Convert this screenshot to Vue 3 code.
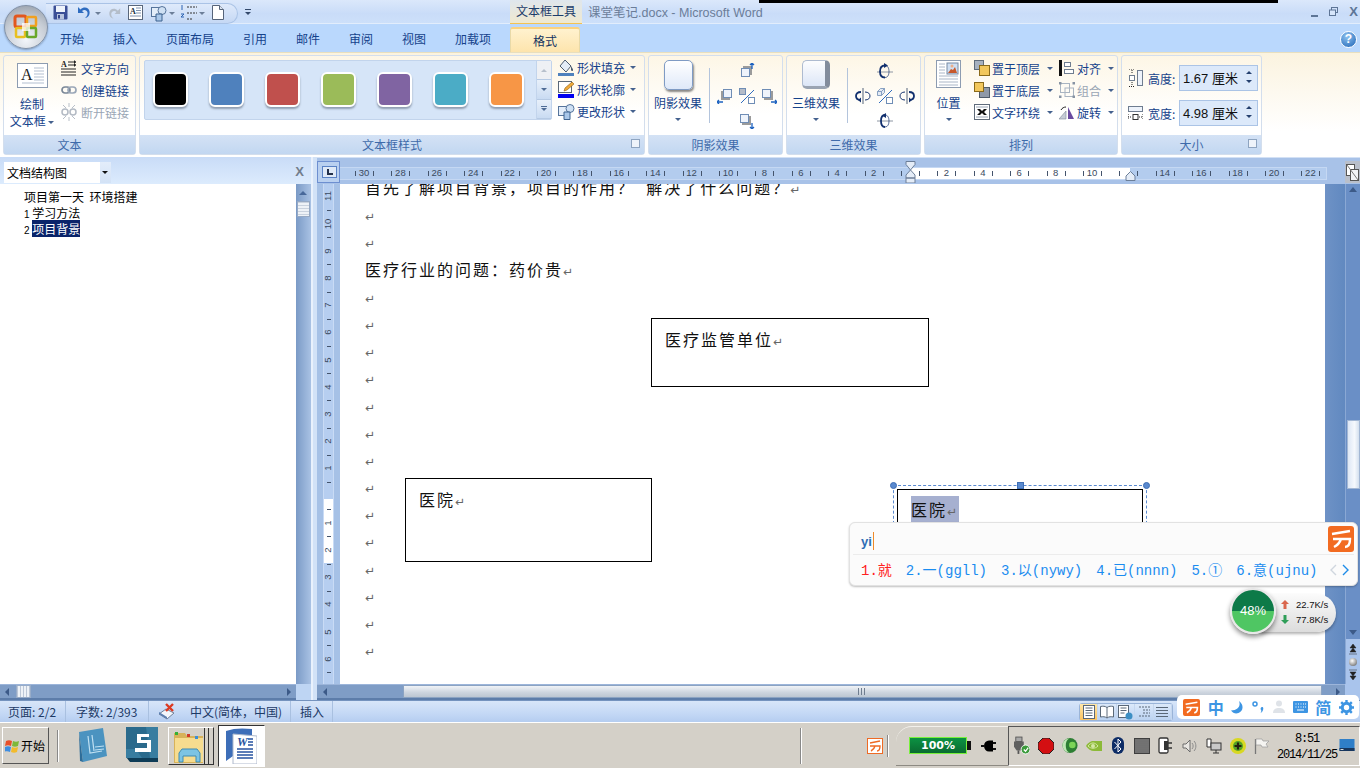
<template>
  <div class="word">
    <!-- title row -->
    <div class="titlebar">
      <div class="black-line"></div>
      <div class="orb">
        <svg width="26" height="26" viewBox="0 0 26 26">
          <rect x="2" y="2" width="11" height="11" rx="2" fill="none" stroke="#e2571e" stroke-width="3" />
          <rect x="14" y="3" width="9" height="9" rx="1" fill="none" stroke="#f0a020" stroke-width="2.5" />
          <rect x="3" y="14" width="9" height="9" rx="1" fill="none" stroke="#e8c020" stroke-width="2.5" />
          <rect x="14" y="14" width="9" height="9" rx="1" fill="none" stroke="#6aa82a" stroke-width="2.5" />
          <rect x="9" y="9" width="8" height="8" fill="#fff" opacity=".75" />
        </svg>
      </div>
      <div class="qat">
        <svg class="q1" width="15" height="15" viewBox="0 0 15 15">
          <rect x=".5" y=".5" width="14" height="14" rx="1" fill="#3b4f96" />
          <rect x="3" y="1" width="9" height="6" fill="#eef3fb" />
          <rect x="4" y="9" width="7" height="5.5" fill="#b8c4de" />
          <rect x="5" y="10" width="2" height="3.5" fill="#33458a" />
        </svg>
        <svg class="q2" width="16" height="15" viewBox="0 0 16 15">
          <path d="M3 2v6h6L7 6c2-2 5-1 5.500 1.500.3 2-.5 4-2.500 5.500 3.500-.5 5-3.500 4.500-6.500C14 2.500 9 1 5.500 4.500z" fill="#2f6cc0" />
        </svg>
        <i class="mini-arrow a1"></i>
        <svg class="q3" width="15" height="15" viewBox="0 0 16 15">
          <path d="M13 2v6H7l2-2C7 4 4 5 3.500 7.500c-.3 2 .5 4 2.500 5.500C2.500 12.500 1 9.500 1.500 6.500 2 2.500 7 1 10.500 4.500z" fill="#b4bdc9" />
        </svg>
        <svg class="q4" width="15" height="15" viewBox="0 0 15 15">
          <rect x=".5" y=".5" width="14" height="14" fill="#fff" stroke="#59677c" />
          <text x="2" y="9" font-size="8" font-weight="bold" font-family="Liberation Serif" fill="#234">A</text>
          <path d="M8 3h5M8 5.500h5M8 8h5M2 11h11" stroke="#7f92ad" />
        </svg>
        <svg class="q5" width="16" height="17" viewBox="0 0 16 17">
          <rect x=".5" y="2.500" width="9" height="9" fill="#e3edf9" stroke="#56749b" />
          <circle cx="11" cy="5.500" r="4" fill="#cfe0f3" stroke="#56749b" />
          <path d="M5 9h6v7H5z" fill="#a9c7e9" stroke="#3d628f" />
        </svg>
        <i class="mini-arrow a2"></i>
        <svg class="q6" width="18" height="16" viewBox="0 0 18 16">
          <path d="M7 2h10M7 8h10M7 14h6" stroke="#333" stroke-dasharray="2 1" />
          <path d="M2 0v5M1 9h3l-3 3h3" stroke="#2d62b1" fill="none" />
        </svg>
        <i class="mini-arrow a3"></i>
        <svg class="q7" width="12" height="15" viewBox="0 0 12 15">
          <path d="M.5.500h7l4 4v10H.5z" fill="#fff" stroke="#56647a" />
          <path d="M7.500.500v4h4" fill="#dbe4ef" stroke="#56647a" />
        </svg>
      </div>
      <div class="qat-more"><i></i><b></b></div>
      <div class="ctx-label">文本框工具</div>
      <div class="doc-title">课堂笔记.docx - Microsoft Word</div>
      <div class="winctl">
        <span class="min"></span>
        <svg width="9" height="9" viewBox="0 0 9 9">
          <rect x="2.500" y=".5" width="6" height="5" fill="none" stroke="#5d7596" />
          <rect x=".5" y="3" width="6" height="5.500" fill="#d6e5fa" stroke="#5d7596" />
        </svg>
        <span class="x">X</span>
      </div>
    </div>

    <!-- tabs -->
    <div class="tabs">
      <span v-for="t in tabs" :key="t" class="tab">{{ t }}</span>
      <span class="tab tab-active">格式</span>
      <span class="help">?</span>
    </div>

    <!-- ribbon -->
    <div class="ribbon">
      <section class="group g-text">
        <div class="group-body text-body">
          <div class="big-btn draw-btn">
            <svg width="31" height="25" viewBox="0 0 31 25">
              <rect x=".5" y=".5" width="30" height="24" fill="#fff" stroke="#8d9cb1" />
              <text x="4" y="17" font-size="16" font-family="Liberation Serif" fill="#222">A</text>
              <path d="M17 5h10M17 8h10M17 11h10M17 14h10M17 17h10M5 20h22" stroke="#b3bfd0" />
            </svg>
            <div class="lbl">绘制</div>
            <div class="lbl">文本框 <i class="arr"></i></div>
          </div>
          <div class="small-col">
            <div class="small-row">
              <svg width="16" height="17" viewBox="0 0 16 17">
                <text x="0" y="7" font-size="8" font-weight="bold" font-family="Liberation Serif" fill="#222">A</text>
                <path d="M7 2h8M7 5h8M0 9h15M0 12h15M0 15h15" stroke="#222" />
                <path d="M13 0l2 2-2 2zM13 3l2 2-2 2z" fill="#222" />
              </svg>
              <span>文字方向</span>
            </div>
            <div class="small-row">
              <svg width="16" height="10" viewBox="0 0 16 10">
                <rect x="1" y="2" width="8" height="6" rx="3" fill="none" stroke="#7a8797" stroke-width="1.700" />
                <rect x="7" y="2" width="8" height="6" rx="3" fill="none" stroke="#9aa7b8" stroke-width="1.700" />
              </svg>
              <span>创建链接</span>
            </div>
            <div class="small-row off">
              <svg width="16" height="18" viewBox="0 0 16 18">
                <path d="M2 2l3 3M14 2l-3 3M8 0v4M2 16l3-3M14 16l-3-3M8 14v4" stroke="#b8bfc8" />
                <rect x="1" y="6" width="6" height="6" rx="3" fill="none" stroke="#b3bac4" stroke-width="1.500" />
                <rect x="9" y="6" width="6" height="6" rx="3" fill="none" stroke="#b3bac4" stroke-width="1.500" />
              </svg>
              <span>断开链接</span>
            </div>
          </div>
        </div>
        <div class="group-foot">文本</div>
      </section>

      <section class="group g-style">
        <div class="group-body style-body">
          <div class="gallery">
            <div class="swatches">
              <span v-for="c in swatches" :key="c" class="swatch" :style="{ background: c }"></span>
            </div>
            <div class="gal-scroll">
              <span class="up"><i></i></span>
              <span class="down"><i></i></span>
              <span class="more"><b></b><i></i></span>
            </div>
          </div>
          <div class="small-col style-col">
            <div class="small-row">
              <svg width="17" height="17" viewBox="0 0 17 17">
                <path d="M7 1l6 6-5 6-6-6z" fill="#e4ecf6" stroke="#4d5c70" />
                <path d="M13 7c1 2 2.500 3 2 4.500-.6 1-2 .5-2-1z" fill="#4d5c70" />
                <rect x="0" y="14" width="16" height="3" fill="#4f81bd" />
              </svg>
              <span>形状填充</span><i class="arr"></i>
            </div>
            <div class="small-row">
              <svg width="17" height="17" viewBox="0 0 17 17">
                <rect x=".5" y=".5" width="13" height="11" fill="#fff" stroke="#5a6878" />
                <path d="M6 10l1-3 7-6 2 2-7 6z" fill="#efa93a" stroke="#8c5c14" stroke-width=".6" />
                <rect x="0" y="13" width="16" height="4" fill="#0000f0" />
              </svg>
              <span>形状轮廓</span><i class="arr"></i>
            </div>
            <div class="small-row">
              <svg width="17" height="17" viewBox="0 0 17 17">
                <rect x=".5" y="3.500" width="9" height="9" fill="#e3edf9" stroke="#56749b" />
                <circle cx="12" cy="5.500" r="4" fill="#cfe0f3" stroke="#56749b" />
                <path d="M6 9h6v7.500H6z" fill="#a9c7e9" stroke="#3d628f" />
              </svg>
              <span>更改形状</span><i class="arr"></i>
            </div>
          </div>
        </div>
        <div class="group-foot">文本框样式<em class="launcher"></em></div>
      </section>

      <section class="group g-fx">
        <div class="group-body fx-body">
          <div class="big-btn fx-btn">
            <span class="shadow-shape"></span>
            <div class="lbl">阴影效果</div>
            <i class="arr"></i>
          </div>
          <div class="fx-sep"></div>
          <div class="nudge">
            <svg v-for="n in shadowNudge" :key="n.id" :class="n.id" width="16" height="16" viewBox="0 0 16 16">
              <rect :x="n.sx" :y="n.sy" width="9" height="9" fill="#9b9b9b" />
              <rect :x="n.bx + .5" :y="n.by + .5" width="8" height="8" fill="#eef3fb" stroke="#6f8db5" />
              <path :d="n.d" stroke="#1d62c0" stroke-width="1.300" fill="none" />
            </svg>
            <svg class="c" width="16" height="16" viewBox="0 0 16 16">
              <rect x=".5" y=".5" width="6" height="6" fill="#b4bcc8" stroke="#6f8db5" />
              <rect x="9.500" y="9.500" width="6" height="6" fill="#fff" stroke="#6f8db5" />
              <path d="M2 15L15 2" stroke="#2f6cc0" />
            </svg>
          </div>
        </div>
        <div class="group-foot">阴影效果</div>
      </section>

      <section class="group g-fx">
        <div class="group-body fx-body">
          <div class="big-btn fx-btn">
            <span class="cube-shape"></span>
            <div class="lbl">三维效果</div>
            <i class="arr"></i>
          </div>
          <div class="fx-sep"></div>
          <div class="nudge">
            <svg class="t" width="16" height="16" viewBox="0 0 16 16">
              <path d="M0 9h16" stroke="#8d96a3" />
              <path d="M8 2.500C4 2.500 3 5.500 3 8.500s1 6 5 6" fill="none" stroke="#12306e" stroke-width="1.800" />
              <path d="M8 2.500c3 0 4 3 4 6s-1 6-4 6" fill="none" stroke="#12306e" stroke-width=".7" />
              <path d="M7 0l4 2.500L7 5z" fill="#12306e" />
            </svg>
            <svg class="l" width="16" height="16" viewBox="0 0 16 16">
              <path d="M8 0v16" stroke="#8d96a3" stroke-width="1.500" />
              <path d="M6 4C2.500 4 1 6 1 8s1.500 4 5 4" fill="none" stroke="#12306e" stroke-width="1.800" />
              <path d="M10 4c3.500 0 5 2 5 4s-1.500 4-5 4" fill="none" stroke="#12306e" stroke-width="1" />
              <path d="M6 9.500v5L3 12z" fill="#12306e" />
            </svg>
            <svg class="c" width="16" height="16" viewBox="0 0 16 16">
              <path d="M.5 3.500l3-3h4v4l-3 3h-4zM.5 3.500h4v4M4.500 3.500l3-3" fill="#e4ebf5" stroke="#6f8db5" stroke-width=".8" />
              <rect x="9.500" y="9.500" width="6" height="6" fill="#fff" stroke="#6f8db5" />
              <path d="M2 15L15 2" stroke="#2f6cc0" />
            </svg>
            <svg class="r" width="16" height="16" viewBox="0 0 16 16">
              <path d="M8 0v16" stroke="#8d96a3" stroke-width="1.500" />
              <path d="M10 4c3.500 0 5 2 5 4s-1.500 4-5 4" fill="none" stroke="#12306e" stroke-width="1.800" />
              <path d="M6 4C2.500 4 1 6 1 8s1.500 4 5 4" fill="none" stroke="#12306e" stroke-width="1" />
              <path d="M10 9.500v5l3-2.500z" fill="#12306e" />
            </svg>
            <svg class="b" width="16" height="16" viewBox="0 0 16 16">
              <path d="M0 8h16" stroke="#8d96a3" />
              <path d="M8 2c-3 0-4 3-4 6s1 6 4 6" fill="none" stroke="#12306e" stroke-width="1.800" />
              <path d="M8 2c3 0 4 3 4 6s-1 6-4 6" fill="none" stroke="#12306e" stroke-width=".7" />
              <path d="M9 0L5 2.500 9 5z" fill="#12306e" />
            </svg>
          </div>
        </div>
        <div class="group-foot">三维效果</div>
      </section>

      <section class="group g-arrange">
        <div class="group-body arrange-body">
          <div class="big-btn pos-btn">
            <svg width="25" height="28" viewBox="0 0 25 28">
              <rect x=".5" y=".5" width="24" height="27" fill="#fff" stroke="#8d9cb1" />
              <path d="M3 4h6M3 7h6M3 10h6M3 13h6M3 16h19M3 19h19M3 22h19M3 25h19" stroke="#aab6c7" />
              <rect x="11" y="3" width="11" height="11" fill="#cfdff2" stroke="#7689a3" />
              <path d="M12 13l3-4 2 1 2-3 2 6z" fill="#c7582c" />
              <circle cx="16" cy="6" r="1.500" fill="#ecae8a" />
            </svg>
            <div class="lbl">位置</div>
            <i class="arr"></i>
          </div>
          <div class="small-col arr-col">
            <div class="small-row">
              <svg width="16" height="16" viewBox="0 0 16 16"><rect x=".5" y=".5" width="9" height="9" fill="#a7b1bf" stroke="#5f6b7a" /><rect x="5.500" y="5.500" width="10" height="10" fill="#f2c75c" stroke="#8a6a1a" /></svg>
              <span>置于顶层</span><i class="arr"></i>
            </div>
            <div class="small-row">
              <svg width="16" height="16" viewBox="0 0 16 16"><rect x="5.500" y="5.500" width="10" height="10" fill="#8f99a8" stroke="#4f5b6a" /><rect x=".5" y=".5" width="9" height="9" fill="#f2c75c" stroke="#8a6a1a" /></svg>
              <span>置于底层</span><i class="arr"></i>
            </div>
            <div class="small-row">
              <svg width="16" height="16" viewBox="0 0 16 16"><rect x=".5" y=".5" width="15" height="15" fill="#fff" stroke="#5f6b7a" /><path d="M2 3h12M2 13h12" stroke="#98a4b4" /><path d="M3 5l3 3-3 3h3l2-2 2 2h3l-3-3 3-3h-3L8 7 6 5z" fill="#111" /></svg>
              <span>文字环绕</span><i class="arr"></i>
            </div>
          </div>
          <div class="small-col arr-col2">
            <div class="small-row">
              <svg width="16" height="16" viewBox="0 0 16 16"><rect x="0" y="0" width="3" height="16" fill="#111" /><rect x="5.500" y="2.500" width="6" height="4" fill="#fff" stroke="#6f7d90" /><rect x="5.500" y="9.500" width="9" height="4" fill="#fff" stroke="#6f7d90" /></svg>
              <span>对齐</span><i class="arr"></i>
            </div>
            <div class="small-row off">
              <svg width="16" height="16" viewBox="0 0 16 16"><rect x="1.500" y="1.500" width="9" height="9" fill="none" stroke="#a9b4c2" /><rect x="6" y="6" width="8.500" height="8.500" fill="none" stroke="#a9b4c2" /><path d="M0 0h2.500v2.500H0zM13.500 0H16v2.500h-2.500zM0 13.500h2.500V16H0zM13.500 13.500H16V16h-2.500z" fill="#8793a3" /></svg>
              <span>组合</span><i class="arr"></i>
            </div>
            <div class="small-row">
              <svg width="16" height="16" viewBox="0 0 16 16"><path d="M0 15L7 7v8z" fill="#c6ccd6" stroke="#7d8897" stroke-width=".6" /><path d="M15 15L9 3v12z" fill="#6a4ba0" /><path d="M2 6c1-2 3-3 5-3" fill="none" stroke="#222" /></svg>
              <span>旋转</span><i class="arr"></i>
            </div>
          </div>
        </div>
        <div class="group-foot">排列</div>
      </section>

      <section class="group g-size">
        <div class="group-body size-body">
          <div class="size-row">
            <svg width="15" height="18" viewBox="0 0 15 18">
              <rect x="9.500" y="1.500" width="5" height="15" fill="#eef3fb" stroke="#6f7d90" />
              <rect x="1.500" y="6.500" width="5" height="5" fill="#fff" stroke="#6f7d90" />
              <path d="M1 0h6M1 17.500h6" stroke="#222" stroke-dasharray="1 1" />
              <path d="M4 1v4M4 13v4" stroke="#222" stroke-dasharray="1 1" />
            </svg>
            <span class="sz-lbl">高度:</span>
            <div class="spin"><span>1.67 厘米</span><div class="spin-btns"><i class="u"></i><i class="d"></i></div></div>
          </div>
          <div class="size-row">
            <svg width="15" height="14" viewBox="0 0 15 14">
              <rect x=".5" y=".5" width="14" height="5" fill="#eef3fb" stroke="#6f7d90" />
              <path d="M0 8v6M15 8v6M0 11h4M11 11h4" fill="none" stroke="#222" stroke-dasharray="1 1" />
              <rect x="5" y="8.500" width="5" height="5" fill="#fff" stroke="#333" />
            </svg>
            <span class="sz-lbl">宽度:</span>
            <div class="spin"><span>4.98 厘米</span><div class="spin-btns"><i class="u"></i><i class="d"></i></div></div>
          </div>
        </div>
        <div class="group-foot">大小<em class="launcher"></em></div>
      </section>
    </div>

    <!-- main -->
    <div class="work">
      <aside class="nav">
        <div class="nav-head">
          <div class="nav-select"><span>文档结构图</span><i></i></div>
          <span class="nav-x">X</span>
        </div>
        <div class="nav-main">
          <div class="nav-list">
            <div>项目第一天&nbsp; 环境搭建</div>
            <div><small>1</small> 学习方法</div>
            <div><small>2</small> <mark>项目背景</mark></div>
          </div>
          <div class="vscroll">
            <i class="tri-up"></i>
            <span class="thumb"></span>
          </div>
        </div>
        <div class="nav-hscroll">
          <i class="tri-l"></i><span class="hthumb"></span><i class="tri-r"></i>
        </div>
      </aside>
      <div class="split"></div>

      <div class="docarea">
        <div class="ruler-top">
          <div class="corner"><span></span></div>
          <div class="hruler">
            <div class="white-zone"></div>
            <span v-for="n in hNums" :key="n.x" class="hnum" :style="{ left: n.x + 'px' }">{{ n.t }}</span>
            <span v-for="x in hTicks" :key="'t' + x" class="htick" :style="{ left: x + 'px' }"></span>
            <svg class="indent-l" width="11" height="22" viewBox="0 0 11 22">
              <path d="M1 .5h9v3L5.500 9 1 3.500zM5.500 9L10 14v3H1v-3zM1 17h9v5H1z" fill="#e4ecf7" stroke="#6c7f99" />
            </svg>
            <svg class="indent-r" width="11" height="10" viewBox="0 0 11 10">
              <path d="M5.500 .5L10 5v4.500H1V5z" fill="#e4ecf7" stroke="#6c7f99" />
            </svg>
          </div>
          <div class="ruler-toggle">
            <svg width="13" height="17" viewBox="0 0 13 17">
              <rect x=".5" y=".5" width="8" height="11" fill="#fff" stroke="#555" />
              <rect x="4.500" y="5.500" width="8" height="11" fill="#f2f4f7" stroke="#555" />
              <path d="M1 1l11 15" stroke="#777" />
            </svg>
          </div>
        </div>
        <div class="doc-mid">
          <div class="vruler">
            <div class="vband">
              <div class="vwhite"></div>
              <span v-for="n in vNums" :key="n.y" class="vnum" :style="{ top: n.y + 'px' }">{{ n.t }}</span>
              <span v-for="y in vTicks" :key="'v' + y" class="vtick" :style="{ top: y + 'px' }"></span>
            </div>
          </div>
          <div class="page">
            <p class="cut">首先了解项目背景，项目的作用？&nbsp; 解决了什么问题？<i class="ret">↵</i></p>
            <p><i class="ret">↵</i></p>
            <p><i class="ret">↵</i></p>
            <p>医疗行业的问题：药价贵<i class="ret">↵</i></p>
            <p v-for="n in 14" :key="n"><i class="ret">↵</i></p>

            <div class="shape s1">医疗监管单位<i class="ret">↵</i></div>
            <div class="shape s2">医院<i class="ret">↵</i></div>
            <div class="sel-frame">
              <span class="h h1"></span><span class="h h2"></span><span class="h h3"></span>
              <div class="shape s3"><span class="sel-text">医院<i class="ret">↵</i></span></div>
            </div>
          </div>
          <div class="gutter"></div>
          <div class="main-vs">
            <i class="main-up"></i>
            <span class="main-thumb"></span>
            <i class="main-down"></i>
            <div class="browse">
              <svg width="12" height="12" viewBox="0 0 12 12"><path d="M6 1L9 5H3zM6 5l3 4H3zM2 11h8" fill="#222" stroke="#222" stroke-width=".5" /></svg>
              <span class="browse-dot"></span>
              <svg width="12" height="12" viewBox="0 0 12 12"><path d="M2 1h8M6 7L3 3h6zM6 11L3 7h6z" fill="#222" stroke="#222" stroke-width=".5" /></svg>
            </div>
          </div>
        </div>
        <div class="main-hs">
          <i class="tri-l"></i>
          <div class="main-hthumb"><span class="grip"></span></div>
          <i class="tri-r"></i>
        </div>
      </div>

      <!-- IME candidate window -->
      <div class="ime">
        <div class="ime-top">
          <b>yi</b><span class="caret"></span>
          <div class="ime-logo"><svg width="26" height="26" viewBox="0 0 26 26"><rect width="26" height="26" rx="3" fill="#f26b21" /><path d="M4 8c6-1 12-2 18-3M5 13h17c0 5-1 8-5 8M13 13c-1 3-3 6-7 8" fill="none" stroke="#fff" stroke-width="2.400" /></svg></div>
        </div>
        <div class="ime-cands">
          <span class="hit">1.就</span>
          <span v-for="c in candidates" :key="c">{{ c }}</span>
          <span class="pager">
            <svg width="8" height="12" viewBox="0 0 8 12"><path d="M7 1L2 6l5 5" fill="none" stroke="#cfd6de" stroke-width="1.400" /></svg>
            <svg width="8" height="12" viewBox="0 0 8 12"><path d="M1 1l5 5-5 5" fill="none" stroke="#1d8ce8" stroke-width="1.400" /></svg>
          </span>
        </div>
      </div>

      <!-- net speed widget -->
      <div class="net">
        <div class="net-speed">
          <div><svg width="8" height="9" viewBox="0 0 8 9"><path d="M4 0l4 4H5.500v5h-3V4H0z" fill="#d9664d" /></svg><span>22.7K/s</span></div>
          <div><svg width="8" height="9" viewBox="0 0 8 9"><path d="M4 9L0 5h2.500V0h3v5H8z" fill="#2f9e58" /></svg><span>77.8K/s</span></div>
        </div>
        <div class="net-ball">48%</div>
      </div>
    </div>

    <!-- status -->
    <div class="status">
      <span class="st st1">页面: 2/2</span>
      <span class="st st2">字数: 2/393</span>
      <span class="st st4">
        <svg width="18" height="17" viewBox="0 0 18 17">
          <path d="M1 11l7-5 8 4-7 6z" fill="#f3f6fb" stroke="#6f8099" />
          <path d="M1 11l8 5v-2L1 9z" fill="#5a7eb0" />
          <path d="M8 1l7 7M15 1L8 8" stroke="#dc3a22" stroke-width="2.400" />
        </svg>
        中文(简体，中国)
      </span>
      <span class="st st5">插入</span>
      <div class="views">
        <span class="vb on"><svg width="14" height="14" viewBox="0 0 14 14"><rect x="1.500" y=".5" width="11" height="13" fill="#fff" stroke="#5a6878" /><path d="M3.500 3h7M3.500 5.500h7M3.500 8h7M3.500 10.500h7" stroke="#5a6878" /></svg></span>
        <span class="vb"><svg width="14" height="14" viewBox="0 0 14 14"><path d="M7 2.500C5 1 3 1 .5 1.500v10.500c2.500-.5 4.500-.5 6.500 1 2-1.500 4-1.500 6.500-1V1.500C11 1 9 1 7 2.500zM7 2.500V13" fill="#fff" stroke="#5a6878" /></svg></span>
        <span class="vb"><svg width="15" height="15" viewBox="0 0 15 15"><rect x=".5" y=".5" width="10" height="12" fill="#fff" stroke="#5a6878" /><path d="M2.500 3h6M2.500 5.500h6M2.500 8h4" stroke="#5a6878" /><circle cx="11" cy="11" r="3.500" fill="#3d8fc4" /></svg></span>
        <span class="vb"><svg width="14" height="14" viewBox="0 0 14 14"><path d="M2 2h11M6 5h7M6 8h7M2 11h11" stroke="#5a6878" stroke-dasharray="2 1" /></svg></span>
        <span class="vb"><svg width="14" height="14" viewBox="0 0 14 14"><path d="M1 2.500h12M1 5.500h12M1 8.500h12M1 11.500h12" stroke="#5a6878" /></svg></span>
      </div>
      <div class="ime-bar">
        <svg width="17" height="17" viewBox="0 0 26 26"><rect width="26" height="26" rx="3" fill="#f26b21" /><path d="M4 8c6-1 12-2 18-3M5 13h17c0 5-1 8-5 8M13 13c-1 3-3 6-7 8" fill="none" stroke="#fff" stroke-width="2.600" /></svg>
        <span class="ib-cn">中</span>
        <svg width="13" height="13" viewBox="0 0 13 13"><path d="M8 0c2 5-1 9-8 9.500C2 12.500 5 13 7.500 12 12 10.500 13.500 4 8 0z" fill="#3d95e3" /></svg>
        <svg width="13" height="13" viewBox="0 0 13 13"><circle cx="3" cy="3" r="2" fill="none" stroke="#3d95e3" stroke-width="1.500" /><path d="M10 6c1.500 0 2 2 0 5l-1.500 1c1-1.500 1-2.500.5-3C8 7.500 9 6 10 6z" fill="#3d95e3" /></svg>
        <svg width="12" height="14" viewBox="0 0 12 14"><circle cx="6" cy="3.500" r="3" fill="#dfe3e8" /><path d="M0 13c0-4 3-5 6-5s6 1 6 5z" fill="#dfe3e8" /></svg>
        <svg width="15" height="12" viewBox="0 0 15 12"><rect width="15" height="12" rx="1" fill="#3d95e3" /><path d="M2.500 3h1M5 3h1M7.500 3h1M10 3h1M12 3h1M2.500 6h1M5 6h1M7.500 6h1M10 6h1M12 6h1M4 9h7" stroke="#fff" /></svg>
        <span class="ib-cn">简</span>
        <svg width="15" height="15" viewBox="0 0 15 15"><circle cx="7.500" cy="7.500" r="4.200" fill="none" stroke="#3d95e3" stroke-width="3" /><path d="M7.500 0v3M7.500 12v3M0 7.500h3M12 7.500h3M2.200 2.200l2 2M10.800 10.800l2 2M12.800 2.200l-2 2M4.200 10.800l-2 2" stroke="#3d95e3" stroke-width="2.400" /></svg>
      </div>
    </div>

    <!-- taskbar -->
    <div class="taskbar">
      <div class="start">
        <svg width="16" height="16" viewBox="0 0 16 16">
          <path d="M1 3c2-1 4-1 6 0l-1 5c-2-1-4-1-6 0z" fill="#e8502a" />
          <path d="M8 3c2 1 4 1 6 0l-1 5c-2 1-4 1-6 0z" fill="#7eb83a" />
          <path d="M0 9c2-1 4-1 6 0l-1 5c-2-1-4-1-6 0z" fill="#3e8de0" />
          <path d="M7 9c2 1 4 1 6 0l-1 5c-2 1-4 1-6 0z" fill="#f2bb2c" />
        </svg>
        <span>开始</span>
      </div>
      <span class="tb-div"></span>
      <div class="tb-app app-book">
        <svg width="32" height="38" viewBox="0 0 32 38">
          <path d="M3 5l24-4 4 28-24 6z" fill="#4b93c0" />
          <path d="M3 5l4 30-3-1z" fill="#2e6d99" />
          <path d="M12 9l2 17 12-2M16 8l2 16M19 20l9-1M19 23l9-1" stroke="#bfe0f2" stroke-width="1.200" fill="none" />
        </svg>
      </div>
      <div class="tb-app app-s">
        <svg width="32" height="36" viewBox="0 0 32 36">
          <path d="M0 30l4 5h28v-5z" fill="#0e3c56" />
          <rect width="32" height="31" fill="#2a6a8c" />
          <path d="M20 0h12v31h-8zM0 22h10l6 9H0z" fill="#3f86a8" opacity=".7" />
          <path d="M23 7H11v9h10v5H9v4h16v-12H15v-3h8z" fill="#fff" />
        </svg>
      </div>
      <div class="tb-group">
        <svg width="32" height="34" viewBox="0 0 32 34">
          <path d="M1 3h11l2 3h16v27H1z" fill="#d7b25a" />
          <path d="M2 8h28v24H2z" fill="#f6dc8f" />
          <rect x="2" y="2" width="3" height="3" fill="#35b035" />
          <rect x="14" y="4" width="3" height="3" fill="#d03a2a" />
          <rect x="22" y="6" width="3" height="3" fill="#3a8ed8" />
          <path d="M6 32v-9l3-4h15l3 4v9h-4v-6H10v6z" fill="#7cc4e4" stroke="#3e8bb2" />
        </svg>
      </div>
      <div class="tb-word">
        <svg width="33" height="36" viewBox="0 0 33 36">
          <path d="M2 3c8-3 17-3 26-2v7H9v20l-7 5z" fill="#3d6eb8" />
          <path d="M9 6l24 2v28H9z" fill="#fff" stroke="#aeb9cc" />
          <text x="13" y="18" font-size="12" font-weight="bold" font-style="italic" font-family="Liberation Serif" fill="#2552a0">W</text>
          <path d="M13 21h16M13 24h16M13 27h16M13 30h16M24 11h5M24 14h5M24 17h5" stroke="#2552a0" stroke-width="1.500" />
        </svg>
      </div>

      <div class="tb-fill"></div>
      <span class="tb-div long"></span>
      <svg class="tb-sogou" width="16" height="16" viewBox="0 0 16 16"><rect x=".5" y=".5" width="15" height="15" fill="#fff" stroke="#ee6a24" /><path d="M3 5l10-2M3 8h10c0 3-1 5-3 5M8 8c-.5 2-2 4-4 5" fill="none" stroke="#ee6a24" stroke-width="1.400" /></svg>
      <span class="tb-div short"></span>

      <div class="power">
        <div class="battery"><span>100%</span><i></i></div>
        <svg width="15" height="12" viewBox="0 0 15 12"><path d="M0 6h3M12 3h3M12 9h3" stroke="#111" stroke-width="2" /><path d="M3 6a5 5.500 0 0 1 5-5.500h4v11H8A5 5.500 0 0 1 3 6z" fill="#000" /></svg>
      </div>

      <div class="tray">
        <svg width="18" height="19" viewBox="0 0 18 19"><rect x="2" y="0" width="7" height="5" fill="#a8a8a8" stroke="#555" /><path d="M0 5h11v6l-3 4H3l-3-4z" fill="#5f5f5f" /><path d="M5 15v4" stroke="#555" stroke-width="2" /><circle cx="13" cy="14" r="5" fill="#3b9a3b" stroke="#fff" /><path d="M11 14l2 2 3-4" fill="none" stroke="#fff" stroke-width="1.400" /></svg>
        <svg width="16" height="16" viewBox="0 0 16 16"><path d="M5 0h6l5 5v6l-5 5H5l-5-5V5z" fill="#d40f12" stroke="#222" /></svg>
        <svg width="17" height="17" viewBox="0 0 17 17"><circle cx="8.500" cy="8.500" r="8" fill="#2d7f33" /><path d="M8 1a7.500 7.500 0 1 0 0 15c-3-1-4-4-4-7.500S5 2 8 1z" fill="#bfe8b5" /><circle cx="11" cy="8" r="3.500" fill="#7cd558" /></svg>
        <svg width="16" height="11" viewBox="0 0 16 11"><path d="M6 1C3 2 1 4 0 6c2 3 5 5 8 5h8V1z" fill="#8cba38" /><path d="M2 6c3-4 7-4 10 0-3 3-7 3-10 0z" fill="none" stroke="#d4e8a4" /><circle cx="7" cy="6" r="2" fill="#d4e8a4" /></svg>
        <svg width="12" height="17" viewBox="0 0 12 17"><rect width="12" height="17" rx="6" fill="#0d2c66" /><path d="M2.500 5l6.500 7-3 3V2l3 3-6.500 7" fill="none" stroke="#fff" /></svg>
        <svg width="16" height="16" viewBox="0 0 16 16"><rect width="16" height="16" fill="#3f3f3f" /><path d="M1 2h14M1 4h14M1 6h14M1 8h14M1 10h14M1 12h14M1 14h14" stroke="#d0d0d0" stroke-width=".7" /></svg>
        <svg width="16" height="17" viewBox="0 0 16 17"><rect x="1" y="1" width="9" height="15" rx="1.500" fill="#fff" stroke="#333" stroke-width="1.300" /><path d="M8 6h6M8 11h6" stroke="#333" stroke-width="1.400" /><path d="M6 4h4v9H6z" fill="#333" /></svg>
        <svg width="16" height="14" viewBox="0 0 16 14"><path d="M1 5h3l4-4v12L4 9H1z" fill="#e8e6e2" stroke="#6c6c6c" /><path d="M10 4c1.500 1.500 1.500 4.500 0 6M12 2c2.500 2.500 2.500 7.500 0 10" fill="none" stroke="#8c8c8c" /></svg>
        <svg width="16" height="16" viewBox="0 0 16 16"><path d="M1 1h4v8H1z" fill="#fff" stroke="#333" /><rect x="5" y="5" width="10" height="7" fill="#c8c8c8" stroke="#333" /><path d="M10 12v3M7 15h6" stroke="#333" /></svg>
        <svg width="16" height="16" viewBox="0 0 16 16"><circle cx="8" cy="8" r="8" fill="#d8d823" /><circle cx="8" cy="8" r="5" fill="#55a325" /><path d="M8 4.500v7M4.500 8h7" stroke="#231f0f" stroke-width="2.200" /></svg>
        <svg width="16" height="16" viewBox="0 0 16 16"><path d="M1.500 1v15" stroke="#777" stroke-width="1.300" /><path d="M2 1h6l1 2h6l-3 3 2 3H8L7 7H2z" fill="#f5f4f1" stroke="#999" stroke-width=".7" /></svg>
        <div class="clock"><div>8:51</div><div>2014/11/25</div></div>
        <svg class="desk" width="15" height="13" viewBox="0 0 15 13"><rect width="15" height="12" fill="#2f7fc8" /><rect x="0" y="9" width="15" height="3" fill="#17375e" /><rect x="1" y="10" width="3" height="1" fill="#ddd" /></svg>
      </div>
    </div>
  </div>
</template>

<script setup>
const tabs = ['开始', '插入', '页面布局', '引用', '邮件', '审阅', '视图', '加载项']
const swatches = ['#000000', '#4f81bd', '#c0504d', '#9bbb59', '#8064a2', '#4bacc6', '#f79646']
const candidates = ['2.一(ggll)', '3.以(nywy)', '4.已(nnnn)', '5.①', '6.意(ujnu)']

// s = shadow square, b = box square
const shadowNudge = [
  { id: 't', sx: 4, sy: 3, bx: 2, by: 5, d: 'M13 6V0M11 2l2-2 2 2' },
  { id: 'l', sx: 4, sy: 3, bx: 6, by: 1, d: 'M0 14h6M2 12l-2 2 2 2' },
  { id: 'r', sx: 3, sy: 3, bx: 1, by: 1, d: 'M10 14h6M14 12l2 2-2 2' },
  { id: 'b', sx: 3, sy: 3, bx: 1, by: 1, d: 'M13 10v6M11 14l2 2 2-2' },
]

// ruler is positioned from the 0 mark, 18.2px per unit
const ORIGIN_X = 570
const UNIT_X = 18.2
const hNums = []
const hTicks = []
for (let i = -30; i <= 22; i += 2) {
  const x = ORIGIN_X + i * UNIT_X
  if (i !== 0 && i !== 12) hNums.push({ x, t: Math.abs(i) })
  hTicks.push(x - 9, x + 9)
}

const ORIGIN_Y = 311.5
const UNIT_Y = 27.2
const vNums = []
const vTicks = []
for (let i = -11; i <= 6; i++) {
  const y = ORIGIN_Y + i * UNIT_Y
  if (i !== 0) vNums.push({ y, t: Math.abs(i) })
  vTicks.push(y + 13.6)
}
</script>

<style>
html, body {
  margin: 0;
  overflow: hidden;
}
</style>

<style scoped>
.word {
  width: 1360px;
  height: 768px;
  display: flex;
  flex-direction: column;
  overflow: hidden;
  font-family: "Noto Sans CJK SC", "Liberation Sans", sans-serif;
  font-size: 12px;
  color: #15335f;
  background: #bfdbff;
}
i { font-style: normal; }

/* title */
.titlebar {
  position: relative;
  height: 24px;
  flex: none;
  display: flex;
  background: linear-gradient(#dbe8fb, #c9dcf8 60%, #cde0fa);
  border-bottom: 1px solid #e2edfc;
  box-sizing: border-box;
}
.black-line {
  position: absolute;
  left: 759px;
  top: 0;
  width: 519px;
  height: 3px;
  background: #000;
}
.orb {
  position: absolute;
  left: 4px;
  top: 5px;
  width: 44px;
  height: 44px;
  border-radius: 50%;
  background: radial-gradient(circle at 50% 80%, #f3f6fb, #c6ccd4 55%, #8e97a3);
  border: 1px solid #8291a6;
  box-shadow: 0 1px 2px rgba(40, 60, 90, .4);
  display: flex;
  align-items: center;
  justify-content: center;
  box-sizing: border-box;
  z-index: 3;
}
.qat {
  position: relative;
  width: 192px;
  height: 21px;
  margin: 3px 0 0 46px;
  border: 1px solid #aac3e6;
  border-left: none;
  border-radius: 0 12px 12px 0;
  background: linear-gradient(#dfeafb, #c5d8f4);
  box-sizing: border-box;
}
.qat svg, .qat .mini-arrow { position: absolute; }
.q1 { left: 7px; top: 1px; }
.q2 { left: 29px; top: 1px; }
.a1 { left: 49px; top: 8px; }
.q3 { left: 62px; top: 2px; }
.q4 { left: 82px; top: 1px; }
.q5 { left: 105px; top: 1px; }
.a2 { left: 123px; top: 8px; }
.q6 { left: 134px; top: 1px; }
.a3 { left: 153px; top: 8px; }
.q7 { left: 166px; top: 1px; }
.mini-arrow {
  width: 0;
  height: 0;
  border: 3px solid transparent;
  border-top: 3px solid #6c7e98;
  border-bottom: none;
}
.qat-more {
  margin: 9px 0 0 7px;
  width: 6px;
}
.qat-more i { display: block; height: 1px; background: #33496b; margin-bottom: 2px; }
.qat-more b {
  display: block;
  width: 0;
  height: 0;
  border: 3px solid transparent;
  border-top-color: #33496b;
  border-bottom: none;
}
.ctx-label {
  margin-left: 259px;
  width: 72px;
  height: 23px;
  font-size: 12px;
  line-height: 22px;
  text-align: center;
  color: #1c3c6a;
  background: linear-gradient(#dfe6ed, #f0e9cf);
  border-bottom: 2px solid #f5c250;
  box-sizing: content-box;
}
.doc-title {
  margin-left: 6px;
  font-family: "Liberation Sans", "Noto Sans CJK SC", sans-serif;
  font-size: 12.500px;
  line-height: 27px;
  color: #6b7d99;
  white-space: nowrap;
}
.winctl {
  margin-left: auto;
  display: flex;
  align-items: flex-start;
  gap: 11px;
  padding: 7px 2px 0 0;
}
.winctl .min { width: 7px; height: 2px; margin-top: 8px; background: #5d7596; }
.winctl .x { font: bold 13px/10px "Liberation Sans", sans-serif; color: #5d7596; }

/* tabs */
.tabs {
  height: 28px;
  flex: none;
  display: flex;
  padding-left: 48px;
  gap: 5px;
  position: relative;
  background: #bad8fd;
}
.tab {
  padding: 0 12px;
  line-height: 30px;
  color: #15428b;
  white-space: nowrap;
}
.tab-active {
  margin-left: 2px;
  margin-top: 3px;
  width: 70px;
  box-sizing: border-box;
  padding: 0;
  text-align: center;
  line-height: 23px;
  border-radius: 3px 3px 0 0;
  border: 1px solid #e8d9a8;
  border-bottom: none;
  border-top: 2px solid #fbd27e;
  background: linear-gradient(#fff2cf, #fde4ac);
  color: #15335f;
}
.help {
  position: absolute;
  right: 3px;
  top: 7px;
  width: 15px;
  height: 15px;
  border-radius: 50%;
  background: radial-gradient(circle at 40% 30%, #8fc2f0, #1e64b5);
  border: 1px solid #fff;
  color: #fff;
  font: bold 12px/15px "Liberation Sans", sans-serif;
  text-align: center;
  box-sizing: content-box;
}

/* ribbon */
.ribbon {
  height: 105px;
  flex: none;
  display: flex;
  gap: 3px;
  padding: 2px 0 2px 3px;
  box-sizing: border-box;
  background: linear-gradient(#fbf3df, #ffffff 75%);
  border-top: 1px solid #e8dfbf;
}
.group {
  display: flex;
  flex-direction: column;
  border: 1px solid #d3deed;
  border-radius: 3px;
  background: linear-gradient(#fdf6e6, #ffffff 60%);
  box-sizing: border-box;
}
.g-text { width: 133px; }
.g-style { width: 506px; }
.g-fx { width: 135px; }
.g-arrange { width: 194px; }
.g-size { width: 141px; }
.group-body { flex: 1; display: flex; min-height: 0; }
.group-foot {
  position: relative;
  height: 19px;
  flex: none;
  text-align: center;
  line-height: 19px;
  color: #3e6aaa;
  background: linear-gradient(#d4e2f5, #c2d7f1);
}
.launcher {
  position: absolute;
  right: 4px;
  top: 4px;
  width: 7px;
  height: 7px;
  border: 1px solid #8ea4c0;
  background: #eef3fa;
}
.big-btn {
  display: flex;
  flex-direction: column;
  align-items: center;
  color: #15428b;
}
.lbl { line-height: 17px; white-space: nowrap; }
.arr {
  display: inline-block;
  width: 0;
  height: 0;
  border: 3px solid transparent;
  border-top: 3px solid #44618e;
  border-bottom: none;
  vertical-align: middle;
}
.small-col { display: flex; flex-direction: column; gap: 0; }
.small-row {
  height: 22px;
  display: flex;
  align-items: center;
  gap: 3px;
  color: #15428b;
  white-space: nowrap;
}
.small-row svg { flex: none; }
.small-row .arr { margin-left: 5px; }
.small-row.off { color: #9aa6b5; }

.text-body { padding: 1px 0 0 5px; gap: 6px; }
.draw-btn { width: 46px; padding-top: 6px; }
.draw-btn svg { margin-bottom: 7px; }
.text-body .small-row { gap: 4px; }

.style-body { padding: 4px 0 0 4px; }
.gallery {
  width: 408px;
  height: 60px;
  display: flex;
  background: #d6e5f8;
  border: 1px solid #c2d4ec;
  box-sizing: border-box;
  border-radius: 2px;
}
.swatches {
  flex: 1;
  display: flex;
  gap: 21px;
  padding: 11px 0 0 8px;
}
.swatch {
  width: 35px;
  height: 35px;
  border-radius: 6px;
  border: 2px solid #fff;
  box-sizing: border-box;
  box-shadow: 0 2px 2px rgba(60, 70, 90, .45);
}
.gal-scroll {
  width: 14px;
  display: flex;
  flex-direction: column;
  border-left: 1px solid #c2d4ec;
}
.gal-scroll span {
  flex: 1;
  display: flex;
  flex-direction: column;
  align-items: center;
  justify-content: center;
  background: linear-gradient(#e8f0fa, #c9dbf2);
  border-bottom: 1px solid #b6cae4;
}
.gal-scroll .up { background: #eef0f4; }
.gal-scroll i {
  width: 0;
  height: 0;
  border: 3px solid transparent;
  border-top: 3px solid #4f6c96;
  border-bottom: none;
}
.gal-scroll .up i { border-top: none; border-bottom: 3px solid #b7c0cc; }
.gal-scroll b { width: 6px; height: 1px; background: #4f6c96; margin-bottom: 1px; }
.style-col { padding: 0 0 0 6px; margin-top: -4px; }
.style-col .small-row { gap: 2px; }
.style-col .arr { margin-left: 3px; }

.fx-body { padding-left: 5px; }
.fx-btn { width: 48px; flex: none; padding-top: 4px; }
.fx-btn .lbl { margin-top: 4px; }
.fx-btn .arr { margin-top: 7px; }
.shadow-shape {
  width: 29px;
  height: 30px;
  border: 1px solid #7f9bc4;
  border-radius: 5px;
  background: linear-gradient(#fff, #dfe9f9);
  box-sizing: border-box;
  box-shadow: 1px 2px 2px rgba(60, 60, 60, .6);
}
.cube-shape {
  width: 28px;
  height: 29px;
  margin-bottom: 1px;
  border-radius: 5px;
  background: linear-gradient(#fdfdfe, #dce6f7);
  border: 1px solid #aebbd0;
  border-right: 5px solid #828c9c;
  border-bottom: 3px solid #9aa4b3;
  box-sizing: border-box;
}
.fx-sep {
  flex: none;
  width: 1px;
  height: 55px;
  margin: 12px 0 0 7px;
  background: #b3c4dc;
}
.nudge {
  flex: none;
  width: 66px;
  height: 75px;
  margin: 7px 0 0 7px;
  display: grid;
  grid-template-columns: 22px 22px 22px;
  grid-template-rows: 25px 25px 25px;
  grid-template-areas: ". t ." "l c r" ". b .";
  place-items: start;
}
.nudge .t { grid-area: t; }
.nudge .l { grid-area: l; }
.nudge .c { grid-area: c; }
.nudge .r { grid-area: r; }
.nudge .b { grid-area: b; }

.arrange-body { padding-left: 11px; }
.pos-btn { width: 25px; padding-top: 4px; margin-right: 13px; }
.pos-btn .lbl { margin-top: 6px; }
.pos-btn .arr { margin-top: 7px; }
.arr-col { padding-top: 1px; width: 85px; }
.arr-col2 { padding-top: 1px; }
.arr-col .small-row, .arr-col2 .small-row { gap: 2px; }

.size-body {
  flex-direction: column;
  padding: 9px 0 0 6px;
  gap: 9px;
}
.size-row {
  display: flex;
  align-items: center;
  height: 26px;
  color: #15428b;
}
.size-row svg { width: 15px; margin-right: 5px; flex: none; }
.sz-lbl { margin-right: 3px; width: 28px; white-space: nowrap; }
.spin {
  width: 79px;
  height: 26px;
  display: flex;
  align-items: center;
  justify-content: space-between;
  padding: 0 5px 2px 3px;
  box-sizing: border-box;
  border: 1px solid #abc4e6;
  background: #dce9fa;
  color: #111;
  font-family: "Liberation Sans", "Noto Sans CJK SC", sans-serif;
  font-size: 13px;
}
.spin-btns { display: flex; flex-direction: column; gap: 6px; }
.spin-btns i { width: 0; height: 0; border: 3px solid transparent; }
.spin-btns .u { border-bottom: 3px solid #24406e; border-top: none; }
.spin-btns .d { border-top: 3px solid #24406e; border-bottom: none; }

/* main area */
.work {
  position: relative;
  height: 543px;
  flex: none;
  display: flex;
  background: #bed5f3;
}
.nav {
  width: 311px;
  flex: none;
  display: flex;
  flex-direction: column;
}
.nav-head {
  height: 27px;
  flex: none;
  display: flex;
  align-items: center;
  justify-content: space-between;
  padding: 0 6px 0 4px;
  background: linear-gradient(#c9dcf7, #dcebfd);
  box-sizing: border-box;
}
.nav-select {
  width: 107px;
  height: 21px;
  margin-top: 4px;
  display: flex;
  align-items: center;
  justify-content: space-between;
  background: #fff;
  color: #000;
  font-size: 12px;
}
.nav-select span { padding-left: 3px; }
.nav-select i {
  width: 11px;
  height: 100%;
  background: linear-gradient(#e3edfa, #d3e2f6);
  position: relative;
}
.nav-select i::after {
  content: "";
  position: absolute;
  left: 2px;
  top: 9px;
  border: 3px solid transparent;
  border-top: 3px solid #111;
  border-bottom: none;
}
.nav-x {
  font: bold 13px/14px "Liberation Sans", sans-serif;
  color: #727d8c;
  margin-top: 3px;
  margin-right: 1px;
}
.nav-main { flex: 1; display: flex; min-height: 0; }
.nav-list {
  flex: 1;
  background: #fff;
  color: #000;
  padding: 5px 0 0 24px;
  font-size: 12px;
}
.nav-list div { height: 16px; line-height: 16px; }
.nav-list small {
  font-family: "Liberation Sans", sans-serif;
  font-size: 10px;
}
.nav-list mark { background: #0a246a; color: #fff; }
.vscroll {
  position: relative;
  width: 15px;
  background: linear-gradient(90deg, #7a9ac6, #a9c2e4);
}
.tri-up {
  position: absolute;
  left: 3px;
  top: 7px;
  border: 4px solid transparent;
  border-bottom: 4px solid #47689a;
  border-top: none;
}
.thumb {
  position: absolute;
  left: 1px;
  top: 17px;
  width: 13px;
  height: 16px;
  background: repeating-linear-gradient(#c9d2de 0 1px, #eef2f7 1px 3px);
  border: 1px solid #96a9c4;
  box-sizing: border-box;
}
.nav-hscroll, .main-hs {
  flex: none;
  position: relative;
  background: #7f9dc6;
  border-top: 1px solid #9cb5da;
  border-bottom: 2px solid #5d7daa;
  box-sizing: border-box;
}
.nav-hscroll { margin-right: 15px; height: 16px; }
.tri-l, .tri-r {
  position: absolute;
  top: 3px;
  border: 4px solid transparent;
  border-left: none;
}
.tri-l { left: 5px; border-right: 4px solid #3c5a88; }
.tri-r { right: 5px; border-right: none; border-left: 4px solid #3c5a88; }
.hthumb {
  position: absolute;
  left: 16px;
  top: 0;
  width: 15px;
  height: 13px;
  background: repeating-linear-gradient(90deg, #bcc7d7 0 1px, #eef2f7 1px 3px);
  border: 1px solid #98acc8;
  box-sizing: border-box;
}
.split {
  width: 6px;
  flex: none;
  background: #d2e2f7;
  border-left: 2px solid #e9f1fc;
  box-sizing: border-box;
}

.docarea {
  flex: 1;
  min-width: 0;
  display: flex;
  flex-direction: column;
  background: #a9c4ec;
}
.ruler-top {
  height: 27px;
  flex: none;
  display: flex;
  background: #a8c2e8;
  border-top: 1px solid #d3e1f5;
  box-sizing: border-box;
}
.corner {
  width: 23px;
  height: 22px;
  margin-top: 3px;
  flex: none;
  box-sizing: border-box;
  position: relative;
  background: #b9d0f0;
  border: 1px solid #6d8fd0;
}
.corner span {
  position: absolute;
  left: 4px;
  top: 4px;
  width: 15px;
  height: 12px;
  box-sizing: border-box;
  border: 1px solid #5a82c4;
  background: #dfe9f7;
}
.corner span::after {
  content: "";
  position: absolute;
  left: 4px;
  top: 2px;
  width: 4px;
  height: 4px;
  border-left: 2px solid #22304a;
  border-bottom: 2px solid #22304a;
}
.hruler {
  position: relative;
  width: 987px;
  height: 13px;
  margin-top: 9px;
  background: #b3ccee;
  border: 1px solid #c5d8f3;
  border-width: 1px 1px 1px 0;
  box-sizing: border-box;
}
.white-zone {
  position: absolute;
  left: 570px;
  top: 0;
  width: 220px;
  height: 100%;
  background: #fff;
}
.hnum {
  position: absolute;
  top: 0;
  width: 20px;
  margin-left: -10px;
  text-align: center;
  font: 9.500px/10px "Liberation Sans", sans-serif;
  color: #3a4a60;
}
.htick {
  position: absolute;
  top: 3px;
  width: 1px;
  height: 5px;
  background: #44546c;
}
.indent-l { position: absolute; left: 565px; top: -7px; }
.indent-r { position: absolute; left: 785px; top: 3px; }
.ruler-toggle {
  margin: 3px 0 0 auto;
  width: 15px;
  height: 22px;
  background: #b9bfca;
  display: flex;
  align-items: center;
  justify-content: center;
}

.doc-mid {
  flex: 1;
  min-height: 0;
  display: flex;
}
.vruler {
  width: 23px;
  flex: none;
  background: #a6c1e6;
  padding-left: 6px;
  box-sizing: border-box;
}
.vband {
  position: relative;
  width: 11px;
  height: 100%;
  background: #b6cef0;
  border-left: 1px solid #c9dbf5;
  border-right: 1px solid #c9dbf5;
  box-sizing: border-box;
  overflow: hidden;
}
.vwhite {
  position: absolute;
  left: 0;
  top: 315px;
  width: 100%;
  height: 64px;
  background: #fff;
}
.vnum {
  position: absolute;
  left: -6px;
  width: 20px;
  margin-top: -7px;
  height: 14px;
  text-align: center;
  font: 9.500px/14px "Liberation Sans", sans-serif;
  color: #3a4a60;
  transform: rotate(-90deg);
}
.vtick {
  position: absolute;
  left: 3px;
  width: 4px;
  height: 1px;
  background: #44546c;
}
.page {
  position: relative;
  width: 985px;
  flex: none;
  background: #fff;
  padding: 0 0 0 25px;
  box-sizing: border-box;
  overflow: hidden;
  font-size: 16px;
  letter-spacing: 2px;
  color: #111;
}
.page p {
  margin: 0;
  height: 27.200px;
  line-height: 27.200px;
  white-space: nowrap;
}
.page .cut { margin-top: -10px; }
.ret {
  color: #666;
  font-size: 12px;
  font-family: "DejaVu Sans", sans-serif;
  letter-spacing: 0;
}
/* floating text boxes on the page canvas */
.shape {
  position: absolute;
  box-sizing: border-box;
  border: 1px solid #000;
  background: #fff;
  padding: 7px 13px;
  font-size: 16px;
  line-height: 26px;
}
.s1 { left: 311px; top: 134px; width: 278px; height: 69px; }
.s2 { left: 65px; top: 294px; width: 247px; height: 84px; }
.sel-frame {
  position: absolute;
  left: 553px;
  top: 301px;
  width: 254px;
  height: 80px;
  border: 1px dashed #5a8ad0;
  box-sizing: border-box;
}
.s3 {
  left: 3px;
  top: 3px;
  width: 246px;
  height: 76px;
  padding-top: 6px;
}
.sel-text { background: #a6b0d0; display: inline-block; width: 48px; height: 30px; white-space: nowrap; }
.h {
  position: absolute;
  top: -4px;
  width: 7px;
  height: 7px;
  background: #5a8ad0;
  border: 1px solid #3f6eb4;
  box-sizing: border-box;
  z-index: 1;
}
.h1 { left: -4px; border-radius: 50%; }
.h2 { left: 123px; }
.h3 { right: -4px; border-radius: 50%; }
.gutter {
  flex: none;
  width: 20px;
  background: linear-gradient(90deg, #6e92c6, #6189c0);
}
.main-vs {
  flex: 1;
  position: relative;
  background: #6a8fc6;
  border-left: 1px solid #8aa8d4;
  box-sizing: border-box;
}
.main-up {
  position: absolute;
  left: 3px;
  top: 3px;
  border: 4px solid transparent;
  border-bottom: 5px solid #3c5a88;
  border-top: none;
}
.main-thumb {
  position: absolute;
  left: 1px;
  top: 236px;
  width: 13px;
  height: 69px;
  background: linear-gradient(90deg, #dde7f5, #f6f9fd 60%, #d3dfee);
  border: 1px solid #a3b7d4;
  box-sizing: border-box;
}
.main-down {
  position: absolute;
  left: 3px;
  top: 446px;
  border: 4px solid transparent;
  border-top: 5px solid #3c5a88;
  border-bottom: none;
}
.browse {
  position: absolute;
  left: 0;
  right: 0;
  top: 455px;
  height: 46px;
  background: #a9c4ec;
  display: flex;
  flex-direction: column;
  align-items: center;
  justify-content: space-around;
  padding: 3px 0;
  box-sizing: border-box;
}
.browse-dot {
  width: 8px;
  height: 8px;
  border-radius: 50%;
  background: radial-gradient(circle at 40% 35%, #fff, #555);
}
.main-hs {
  height: 16px;
  margin-right: 15px;
}
.main-hs .tri-l { left: 6px; }
.main-hthumb {
  position: absolute;
  left: 86px;
  top: 0;
  width: 919px;
  height: 13px;
  background: linear-gradient(#f0f3f7, #ccd4de 60%, #bcc6d2);
  border: 1px solid #8ba3c2;
  box-sizing: border-box;
  display: flex;
  align-items: center;
  justify-content: center;
}
.grip {
  width: 9px;
  height: 7px;
  background: repeating-linear-gradient(90deg, #6f7d8f 0 1px, transparent 1px 3px);
}

/* floating IME */
.ime {
  position: absolute;
  left: 849px;
  top: 365px;
  width: 509px;
  height: 64px;
  background: #fbfbfb;
  border: 1px solid #e2e2e2;
  border-radius: 6px;
  box-shadow: 0 1px 2px rgba(0, 0, 0, .25);
  box-sizing: border-box;
  z-index: 5;
}
.ime-top {
  position: relative;
  height: 32px;
  margin: 0 3px;
  border-bottom: 1px solid #ececec;
  padding: 5px 0 0 8px;
  display: flex;
  align-items: center;
  box-sizing: border-box;
}
.ime-top b {
  font: bold 13px "Liberation Sans", sans-serif;
  color: #2d6db5;
}
.caret {
  width: 1px;
  height: 18px;
  background: #ee8a2a;
  margin-left: 1px;
}
.ime-logo {
  position: absolute;
  right: 0;
  top: 3px;
  height: 26px;
}
.ime-cands {
  position: relative;
  display: flex;
  height: 27px;
  align-items: center;
  padding-left: 11px;
  gap: 14px;
  color: #1a8cf0;
  font-family: "Liberation Mono", "Noto Sans CJK SC", monospace;
  font-size: 14px;
  white-space: nowrap;
}
.ime-cands .hit { color: #ff2020; }
.pager {
  position: absolute;
  right: 7px;
  top: 9px;
  display: flex;
  gap: 5px;
}
/* net widget */
.net {
  position: absolute;
  left: 1230px;
  top: 431px;
  width: 106px;
  height: 48px;
  z-index: 4;
}
.net-speed {
  position: absolute;
  left: 30px;
  top: 6px;
  width: 76px;
  height: 38px;
  border-radius: 0 19px 19px 0;
  background: linear-gradient(#fbfbfb, #dcdcdc);
  box-shadow: 0 2px 3px rgba(0, 0, 0, .3);
  padding: 3px 0 0 25px;
  box-sizing: border-box;
  font: 9.500px/15px "Liberation Sans", sans-serif;
  color: #111;
}
.net-speed div { display: flex; align-items: center; gap: 7px; margin-left: -2px; }
.net-speed svg { flex: none; margin-left: -2px; }
.net-ball {
  position: absolute;
  left: 0;
  top: 0;
  width: 46px;
  height: 46px;
  border-radius: 50%;
  border: 2px solid #e8e8e8;
  box-sizing: border-box;
  background: linear-gradient(#0d7a48 0 50%, #4fc663 50%);
  box-shadow: 0 3px 5px rgba(0, 0, 0, .45);
  color: #fff;
  font: 13px/42px "Liberation Sans", sans-serif;
  text-align: center;
}

/* status */
.status {
  position: relative;
  height: 22px;
  flex: none;
  display: flex;
  align-items: stretch;
  background: linear-gradient(#d8e6f9, #c4d8f5 60%, #b5cdf0);
  border-top: 1px solid #7593be;
  box-sizing: border-box;
}
.st {
  display: flex;
  align-items: center;
  padding-left: 8px;
  border-right: 1px solid #a9c0e0;
  box-sizing: border-box;
  white-space: nowrap;
  color: #1d3a66;
}
.st1 { width: 66px; }
.st2 { width: 83px; padding-left: 10px; }
.st4 { width: 142px; padding-left: 9px; gap: 14px; }
.st4 svg { flex: none; }
.st5 { width: 42px; padding-left: 9px; }
.views {
  position: absolute;
  left: 1079px;
  top: 2px;
  height: 18px;
  width: 94px;
  display: flex;
  border: 1px solid #9ab4d8;
  border-radius: 3px;
  background: linear-gradient(#dce9fa, #bbd2f1);
  box-sizing: border-box;
}
.vb {
  flex: 1;
  display: flex;
  align-items: center;
  justify-content: center;
  border-right: 1px solid #c5d7ef;
}
.vb.on { background: linear-gradient(#ffe7a8, #fbc25f); }
.ime-bar {
  position: absolute;
  left: 1177px;
  top: -6px;
  width: 182px;
  height: 24px;
  display: flex;
  align-items: center;
  justify-content: space-between;
  padding: 0 5px 0 6px;
  box-sizing: border-box;
  background: #fff;
  border-radius: 5px;
  z-index: 3;
}
.ib-cn {
  font-size: 16px;
  font-weight: bold;
  color: #3d95e3;
}

/* taskbar */
.taskbar {
  height: 46px;
  flex: none;
  display: flex;
  align-items: center;
  padding-left: 2px;
  background: #d4d0c8;
  border-top: 1px solid #fff;
  box-sizing: border-box;
}
.start {
  width: 47px;
  height: 37px;
  display: flex;
  align-items: center;
  padding-left: 2px;
  border: 1px solid;
  border-color: #fff #555 #555 #fff;
  box-sizing: border-box;
  color: #000;
  font-size: 12px;
}
.tb-div {
  width: 2px;
  height: 32px;
  margin-left: 8px;
  background: #fff;
  border-left: 1px solid #888;
  box-sizing: border-box;
  flex: none;
}
.tb-app { width: 32px; height: 38px; flex: none; }
.app-book { margin-left: 17px; }
.app-s { margin-left: 18px; }
.tb-group {
  width: 46px;
  height: 38px;
  margin-left: 10px;
  padding: 2px 0 0 4px;
  box-sizing: border-box;
  border: 1px solid;
  border-color: #fff #333 #333 #fff;
  box-shadow: inset -4px 0 0 #d4d0c8, inset -5px 0 0 #333, inset -8px 0 0 #d4d0c8, inset -9px 0 0 #333;
  flex: none;
}
.tb-word {
  width: 47px;
  height: 42px;
  margin-left: 4px;
  padding: 2px 0 0 5px;
  background: #fff;
  box-sizing: border-box;
  border: 1px solid;
  border-color: #333 #fff #fff #333;
  flex: none;
}
.tb-fill { flex: 1; }
.tb-div.long { margin: 0 65px 0 0; height: 36px; }
.tb-sogou { flex: none; }
.tb-div.short { margin-left: 4px; height: 22px; }
.power {
  width: 112px;
  height: 40px;
  margin-left: 7px;
  display: flex;
  align-items: center;
  gap: 14px;
  padding-left: 13px;
  box-sizing: border-box;
  border-radius: 16px 0 0 0;
  border-top: 1px solid #f3f1ec;
  border-bottom: 1px solid #8d8a83;
  flex: none;
}
.battery {
  position: relative;
  width: 58px;
  height: 17px;
  box-sizing: border-box;
  border: 1px solid #79f03c;
  background: linear-gradient(#0c9243, #0a6b31);
  color: #fff;
  font: bold 11px/15px "DejaVu Sans", sans-serif;
  text-align: center;
}
.battery i {
  position: absolute;
  right: -5px;
  top: 3px;
  width: 4px;
  height: 9px;
  background: #111;
}
.tray {
  width: 352px;
  height: 40px;
  flex: none;
  display: flex;
  align-items: center;
  padding-left: 5px;
  gap: 8px;
  box-sizing: border-box;
  border-top: 1px solid #555;
  border-left: 1px solid #555;
  border-bottom: 1px solid #fff;
  border-right: 1px solid #fff;
}
.tray svg { flex: none; width: 16px; }
.clock {
  width: 60px;
  margin-left: -1px;
  padding-top: 3px;
  text-align: center;
  color: #000;
  font: 12px/16px "Liberation Mono", monospace;
  letter-spacing: -1.200px;
  white-space: nowrap;
}
.tray .desk { margin-left: -6px; }
</style>
